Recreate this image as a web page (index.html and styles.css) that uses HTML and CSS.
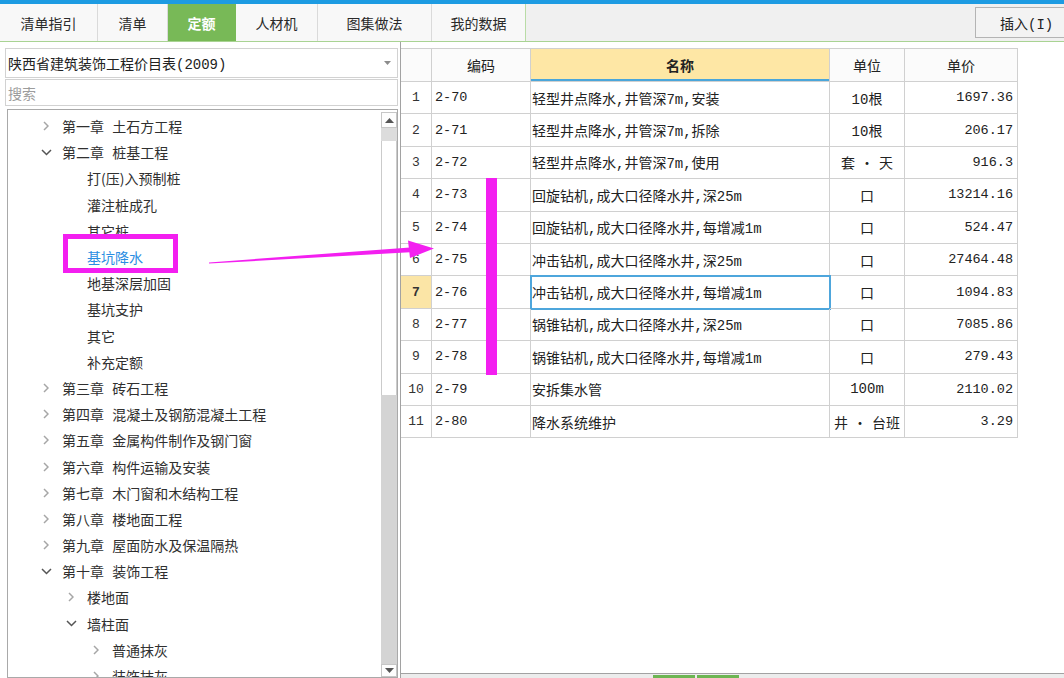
FILE: index.html
```html
<!DOCTYPE html>
<html lang="zh-CN">
<head>
<meta charset="utf-8">
<title>定额</title>
<link rel="stylesheet" href="styles.css">
</head>
<body>
<div class="app">
  <div class="topline"></div>
  <div class="tabbar">
    <div class="tabs">
      <div class="tab t1">清单指引</div>
      <div class="tab t2">清单</div>
      <div class="tab t3 active">定额</div>
      <div class="tab t4">人材机</div>
      <div class="tab t5">图集做法</div>
      <div class="tab t6">我的数据</div>
    </div>
    <div class="tabfill">
      <div class="btn">插入(I)</div>
    </div>
  </div>

  <div class="main">
    <div class="left">
      <div class="select">
        <span class="select-text">陕西省建筑装饰工程价目表(2009)</span>
        <svg class="caret" width="7" height="4" viewBox="0 0 7 4"><path d="M0 0H7L3.5 4Z" fill="#8c8c8c"/></svg>
      </div>
      <div class="search">搜索</div>
      <div class="treebox">
        <div class="tree">
          <div class="row l1"><span class="chev"><svg width="6" height="10" viewBox="0 0 6 10"><path d="M1 1L5 5L1 9" fill="none" stroke="#a6a6a6" stroke-width="1.5"/></svg></span>第一章 土石方工程</div>
          <div class="row l1"><span class="chev"><svg width="11" height="7" viewBox="0 0 11 7"><path d="M1 1L5.5 5.5L10 1" fill="none" stroke="#555" stroke-width="1.5"/></svg></span>第二章 桩基工程</div>
          <div class="row l2"><span class="chev"></span>打(压)入预制桩</div>
          <div class="row l2"><span class="chev"></span>灌注桩成孔</div>
          <div class="row l2"><span class="chev"></span>其它桩</div>
          <div class="row l2 selected"><span class="chev"></span>基坑降水</div>
          <div class="row l2"><span class="chev"></span>地基深层加固</div>
          <div class="row l2"><span class="chev"></span>基坑支护</div>
          <div class="row l2"><span class="chev"></span>其它</div>
          <div class="row l2"><span class="chev"></span>补充定额</div>
          <div class="row l1"><span class="chev"><svg width="6" height="10" viewBox="0 0 6 10"><path d="M1 1L5 5L1 9" fill="none" stroke="#a6a6a6" stroke-width="1.5"/></svg></span>第三章 砖石工程</div>
          <div class="row l1"><span class="chev"><svg width="6" height="10" viewBox="0 0 6 10"><path d="M1 1L5 5L1 9" fill="none" stroke="#a6a6a6" stroke-width="1.5"/></svg></span>第四章 混凝土及钢筋混凝土工程</div>
          <div class="row l1"><span class="chev"><svg width="6" height="10" viewBox="0 0 6 10"><path d="M1 1L5 5L1 9" fill="none" stroke="#a6a6a6" stroke-width="1.5"/></svg></span>第五章 金属构件制作及钢门窗</div>
          <div class="row l1"><span class="chev"><svg width="6" height="10" viewBox="0 0 6 10"><path d="M1 1L5 5L1 9" fill="none" stroke="#a6a6a6" stroke-width="1.5"/></svg></span>第六章 构件运输及安装</div>
          <div class="row l1"><span class="chev"><svg width="6" height="10" viewBox="0 0 6 10"><path d="M1 1L5 5L1 9" fill="none" stroke="#a6a6a6" stroke-width="1.5"/></svg></span>第七章 木门窗和木结构工程</div>
          <div class="row l1"><span class="chev"><svg width="6" height="10" viewBox="0 0 6 10"><path d="M1 1L5 5L1 9" fill="none" stroke="#a6a6a6" stroke-width="1.5"/></svg></span>第八章 楼地面工程</div>
          <div class="row l1"><span class="chev"><svg width="6" height="10" viewBox="0 0 6 10"><path d="M1 1L5 5L1 9" fill="none" stroke="#a6a6a6" stroke-width="1.5"/></svg></span>第九章 屋面防水及保温隔热</div>
          <div class="row l1"><span class="chev"><svg width="11" height="7" viewBox="0 0 11 7"><path d="M1 1L5.5 5.5L10 1" fill="none" stroke="#555" stroke-width="1.5"/></svg></span>第十章 装饰工程</div>
          <div class="row l2"><span class="chev"><svg width="6" height="10" viewBox="0 0 6 10"><path d="M1 1L5 5L1 9" fill="none" stroke="#a6a6a6" stroke-width="1.5"/></svg></span>楼地面</div>
          <div class="row l2"><span class="chev"><svg width="11" height="7" viewBox="0 0 11 7"><path d="M1 1L5.5 5.5L10 1" fill="none" stroke="#555" stroke-width="1.5"/></svg></span>墙柱面</div>
          <div class="row l3"><span class="chev"><svg width="6" height="10" viewBox="0 0 6 10"><path d="M1 1L5 5L1 9" fill="none" stroke="#a6a6a6" stroke-width="1.5"/></svg></span>普通抹灰</div>
          <div class="row l3"><span class="chev"><svg width="6" height="10" viewBox="0 0 6 10"><path d="M1 1L5 5L1 9" fill="none" stroke="#a6a6a6" stroke-width="1.5"/></svg></span>装饰抹灰</div>
        </div>
        <div class="vscroll">
          <div class="sb-btn"><svg width="9" height="5" viewBox="0 0 9 5"><path d="M0 5L4.5 0L9 5Z" fill="#555"/></svg></div>
          <div class="sb-band"></div>
          <div class="sb-thumb"></div>
          <div class="sb-track"></div>
          <div class="sb-btn down"><svg width="9" height="5" viewBox="0 0 9 5"><path d="M0 0L4.5 5L9 0Z" fill="#555"/></svg></div>
        </div>
      </div>
    </div>

    <div class="right">
      <div class="gridwrap">
        <div class="grid">
          <div class="c h num"></div>
          <div class="c h ctr">编码</div>
          <div class="c h ctr hsel">名称</div>
          <div class="c h ctr">单位</div>
          <div class="c h ctr">单价</div>

          <div class="c num">1</div><div class="c code">2-70</div><div class="c name">轻型井点降水,井管深7m,安装</div><div class="c unit">10根</div><div class="c price">1697.36</div>
          <div class="c num">2</div><div class="c code">2-71</div><div class="c name">轻型井点降水,井管深7m,拆除</div><div class="c unit">10根</div><div class="c price">206.17</div>
          <div class="c num">3</div><div class="c code">2-72</div><div class="c name">轻型井点降水,井管深7m,使用</div><div class="c unit">套<span class="dot">·</span>天</div><div class="c price">916.3</div>
          <div class="c num">4</div><div class="c code">2-73</div><div class="c name">回旋钻机,成大口径降水井,深25m</div><div class="c unit">口</div><div class="c price">13214.16</div>
          <div class="c num">5</div><div class="c code">2-74</div><div class="c name">回旋钻机,成大口径降水井,每增减1m</div><div class="c unit">口</div><div class="c price">524.47</div>
          <div class="c num">6</div><div class="c code">2-75</div><div class="c name">冲击钻机,成大口径降水井,深25m</div><div class="c unit">口</div><div class="c price">27464.48</div>
          <div class="c num cur">7</div><div class="c code">2-76</div><div class="c name focus">冲击钻机,成大口径降水井,每增减1m</div><div class="c unit">口</div><div class="c price">1094.83</div>
          <div class="c num">8</div><div class="c code">2-77</div><div class="c name">锅锥钻机,成大口径降水井,深25m</div><div class="c unit">口</div><div class="c price">7085.86</div>
          <div class="c num">9</div><div class="c code">2-78</div><div class="c name">锅锥钻机,成大口径降水井,每增减1m</div><div class="c unit">口</div><div class="c price">279.43</div>
          <div class="c num">10</div><div class="c code">2-79</div><div class="c name">安拆集水管</div><div class="c unit">100m</div><div class="c price">2110.02</div>
          <div class="c num">11</div><div class="c code">2-80</div><div class="c name">降水系统维护</div><div class="c unit">井<span class="dot">·</span>台班</div><div class="c price">3.29</div>
        </div>
      </div>
      <div class="bottombar"><span class="gtab"></span><span class="gtab"></span></div>
    </div>
  </div>

  <svg class="annot" width="1064" height="678" viewBox="0 0 1064 678">
    <rect x="65.5" y="236.5" width="110" height="34" fill="none" stroke="#f31ff0" stroke-width="5"/>
    <polygon points="209,262.4 410,247.4 410,252.2 209,263.6" fill="#f31ff0"/>
    <polygon points="408,240.5 434,248.5 410,258" fill="#f31ff0"/>
    <rect x="486" y="178" width="11" height="197" fill="#f31ff0"/>
  </svg>
</div>
</body>
</html>
```

FILE: styles.css
```css
* { box-sizing: border-box; margin: 0; padding: 0; }

html, body {
  width: 1064px;
  height: 678px;
  overflow: hidden;
  background: #fff;
}

body {
  font-family: "Noto Sans CJK SC", "Noto Sans", sans-serif;
  font-size: 14px;
  color: #333;
}

.app {
  position: relative;
  width: 1064px;
  height: 678px;
  display: flex;
  flex-direction: column;
  overflow: hidden;
}

.topline {
  flex: none;
  height: 4px;
  background: #1d9be2;
}

/* ---------- tab bar ---------- */
.tabbar {
  flex: none;
  height: 38px;
  display: flex;
  background: #f0f0f0;
  border-bottom: 1px solid #a9d393;
}

.tabs { display: flex; }

.tab {
  height: 37px;
  display: flex;
  align-items: center;
  justify-content: center;
  background: #f8f8f8;
  border-right: 1px solid #dadada;
  color: #2a2a2a;
  font-size: 14px;
}
.t1 { width: 98px; }
.t2 { width: 70px; }
.t3 { width: 68px; }
.t4 { width: 82px; }
.t5 { width: 114px; }
.t6 { width: 94px; border-right-color: #b9dca6; }

.tab.active {
  background: #78b957;
  color: #fff;
  font-weight: 700;
  border-right-color: #78b957;
}

.tabfill {
  flex: 1;
  display: flex;
  align-items: center;
  justify-content: flex-end;
}

.btn {
  width: 96px;
  height: 31px;
  margin-right: -7px;
  border: 1px solid #b4b4b4;
  background: #f3f3f3;
  display: flex;
  align-items: center;
  padding-left: 24px;
  font-family: "Liberation Mono", "Noto Sans CJK SC", monospace;
  font-size: 14px;
  color: #222;
}

/* ---------- main ---------- */
.main {
  flex: 1;
  display: flex;
  min-height: 0;
}

.left {
  flex: none;
  width: 400px;
  padding: 6px 2px 0 5px;
  display: flex;
  flex-direction: column;
}

.select {
  flex: none;
  height: 30px;
  border: 1px solid #d2d2d2;
  display: flex;
  align-items: center;
  justify-content: space-between;
  padding: 0 6px 0 2px;
  font-family: "Liberation Mono", "Noto Sans CJK SC", monospace;
  font-size: 14px;
  color: #222;
}

.search {
  flex: none;
  height: 27px;
  margin-top: 1px;
  border: 1px solid #d2d2d2;
  display: flex;
  align-items: center;
  padding-left: 2px;
  color: #9c9c9c;
}

.treebox {
  flex: 1;
  min-height: 0;
  margin: 3px 0 0 2px;
  border: 1px solid #a9a9a9;
  display: flex;
  overflow: hidden;
}

.tree {
  flex: 1;
  padding-top: 3px;
  word-spacing: 5px;
  color: #303030;
}

.row {
  height: 26.2px;
  display: flex;
  align-items: center;
  white-space: nowrap;
  line-height: 1;
}
.row.l1 { padding-left: 30px; }
.row.l2 { padding-left: 55px; }
.row.l3 { padding-left: 80px; }
.row.selected { color: #2b8ee2; }

.chev {
  flex: none;
  width: 16px;
  height: 16px;
  margin-right: 8px;
  display: flex;
  align-items: center;
  justify-content: center;
}

.vscroll {
  flex: none;
  width: 16px;
  display: flex;
  flex-direction: column;
  padding-top: 2px;
  background: #fff;
}

.sb-btn {
  flex: none;
  height: 16px;
  border: 1px solid #c6c6c6;
  background: #fdfdfd;
  display: flex;
  align-items: center;
  justify-content: center;
}
.sb-btn.down { height: 13px; }

.sb-band {
  flex: none;
  height: 13px;
  background: #dcdcdc;
}

.sb-thumb {
  flex: none;
  height: 254px;
  background: #fff;
  border-left: 1px solid #cbcbcb;
  border-right: 1px solid #cbcbcb;
}

.sb-track {
  flex: 1;
  background: #d4d4d4;
}

/* ---------- right grid ---------- */
.right {
  flex: 1;
  border-left: 1px solid #a2a2a2;
  padding-top: 6px;
  display: flex;
  flex-direction: column;
}

.gridwrap { flex: 1; }

.grid {
  display: grid;
  width: 617px;
  grid-template-columns: 31px 99px 299px 75px 113px;
  grid-template-rows: 33px repeat(11, 32.4px);
  border-top: 1px solid #cfcfcf;
  font-size: 14px;
  color: #222;
}

.c {
  border-right: 1px solid #d0d0d0;
  border-bottom: 1px solid #d0d0d0;
  display: flex;
  align-items: center;
  white-space: nowrap;
  overflow: hidden;
}

.h { background: #fbfbfb; color: #222; }
.ctr { justify-content: center; }
.hsel {
  background: #fee7a5;
  font-weight: 700;
  box-shadow: inset 0 -2px 0 #4aa6da;
}

.num {
  justify-content: center;
  font-family: "Liberation Mono", monospace;
  font-size: 13px;
  color: #333;
}
.num.cur {
  background: #fbe5a6;
  font-weight: 700;
}

.code {
  padding-left: 3px;
  font-family: "Liberation Mono", monospace;
  font-size: 13.5px;
}

.name {
  padding-left: 1px;
  font-family: "Liberation Mono", "Noto Sans CJK SC", monospace;
  font-size: 14px;
}
.name.focus {
  outline: 2px solid #4ea6dc;
  outline-offset: -1px;
}

.unit {
  justify-content: center;
  font-family: "Liberation Mono", "Noto Sans CJK SC", monospace;
  font-size: 14px;
}
.dot { margin: 0 5px; font-family: "Noto Sans CJK SC", sans-serif; }

.price {
  justify-content: flex-end;
  padding-right: 4px;
  font-family: "Liberation Mono", monospace;
  font-size: 13.5px;
}

.bottombar {
  flex: none;
  height: 5px;
  border-top: 1px solid #a2a2a2;
  background: #ececec;
  display: flex;
  align-items: flex-end;
  gap: 2px;
  padding-left: 252px;
}
.gtab {
  width: 42px;
  height: 3px;
  background: #6db553;
}

/* ---------- annotation overlay ---------- */
.annot {
  position: absolute;
  left: 0;
  top: 0;
  pointer-events: none;
}
```
